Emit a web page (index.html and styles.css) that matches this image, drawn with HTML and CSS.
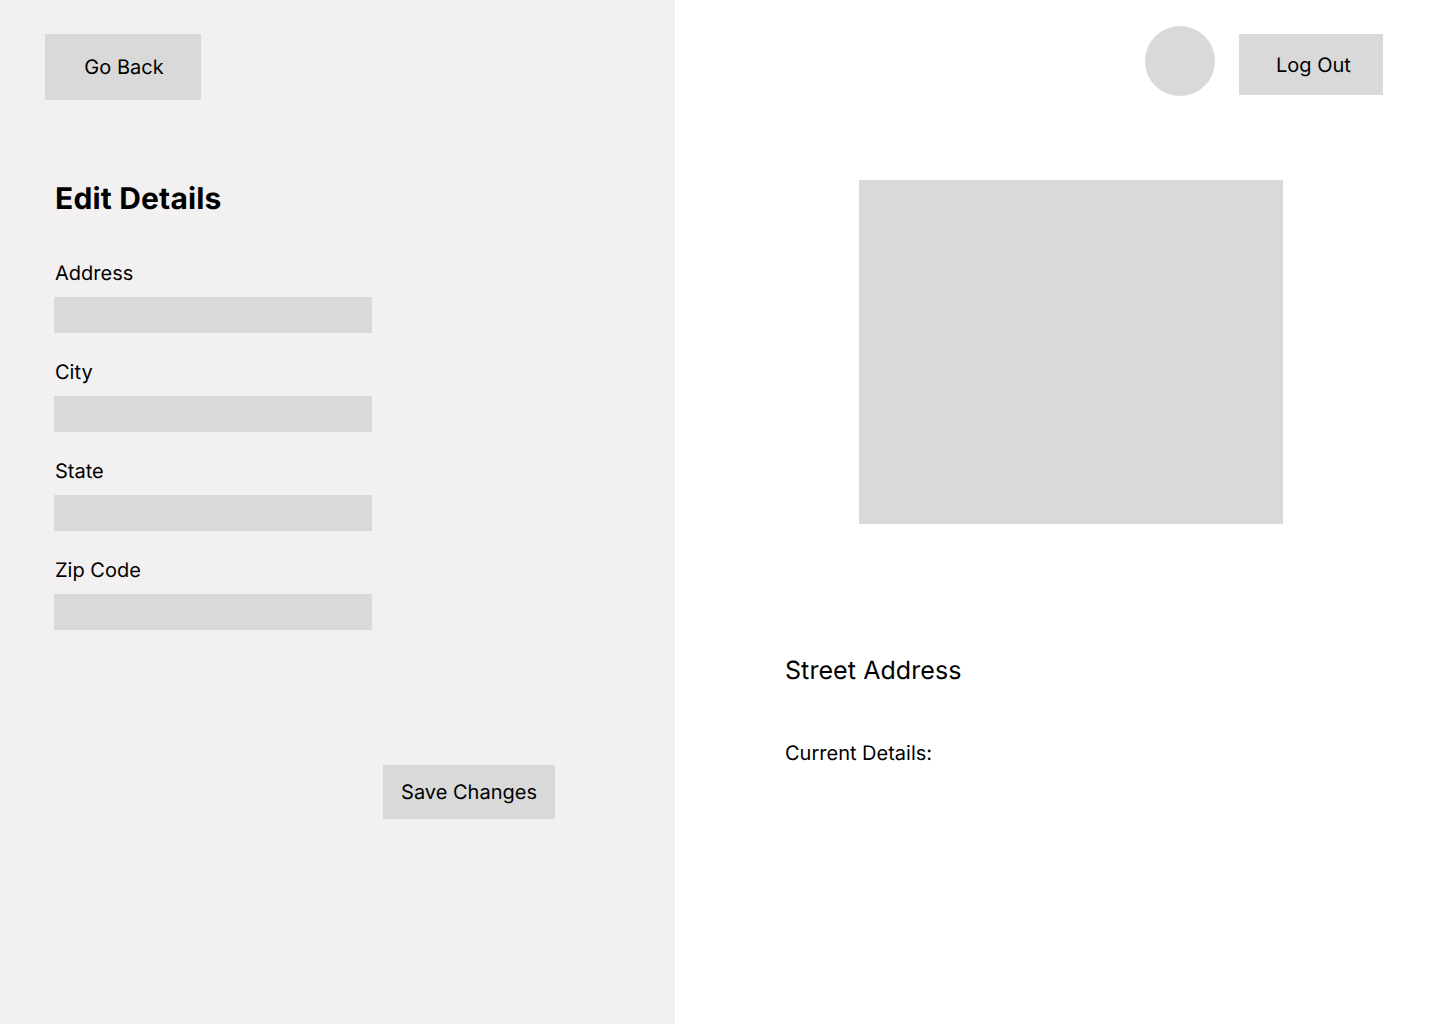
FILE: index.html
```html
<!doctype html>
<html>
	<head>
		<meta charset="utf-8">
		<title>Edit Details</title>
		<link rel="stylesheet" href="styles.css">
	</head>
	<body>
		<div class="page">
			<section class="editor">
				<button class="btn back">Go Back</button>
				<h1>Edit Details</h1>
				<form class="fields">
					<label class="field">
						<span>Address</span>
						<input type="text">
					</label>
					<label class="field">
						<span>City</span>
						<input type="text">
					</label>
					<label class="field">
						<span>State</span>
						<input type="text">
					</label>
					<label class="field">
						<span>Zip Code</span>
						<input type="text">
					</label>
				</form>
				<div class="actions">
					<button class="btn save">Save Changes</button>
				</div>
			</section>
			<section class="details">
				<header class="top">
					<div class="avatar"></div>
					<button class="btn logout">Log Out</button>
				</header>
				<div class="photo"></div>
				<h2>Street Address</h2>
				<p>Current Details:</p>
			</section>
		</div>
	</body>
</html>
```

FILE: styles.css
```css
* {
	box-sizing: border-box;
}
body {
	margin: 0;
	font-family: Inter, sans-serif;
	color: black;
	background: white;
	text-rendering: geometricPrecision;
}
.page {
	display: flex;
	height: 1024px;
	overflow: hidden;
}
.btn {
	display: block;
	border: 0;
	border-radius: 0;
	padding: 0;
	background: #D9D9D9;
	color: black;
	font-family: inherit;
	font-size: 20px;
	text-rendering: geometricPrecision;
}

/* left side */
.editor {
	width: 675px;
	flex: none;
	background: #F2F0F1;
	padding: 34px 0 0 45px;
}
.back {
	width: 156px;
	height: 66px;
	padding-left: 2px;
}
h1 {
	margin: 81px 0 0 10px;
	font-size: 30px;
	line-height: 36px;
	font-weight: 700;
	letter-spacing: .17px;
}
.fields {
	margin: 44px 0 0 9px;
	display: flex;
	flex-direction: column;
	gap: 27px;
}
.field {
	display: block;
}
.field span {
	display: block;
	margin-left: 1px;
	font-size: 20px;
	line-height: 24px;
	margin-bottom: 12px;
}
.field input {
	display: block;
	width: 318px;
	height: 36px;
	border: 0;
	border-radius: 0;
	padding: 0;
	background: #D9D9D9;
}
.actions {
	margin: 135px 0 0 338px;
}
.save {
	width: 172px;
	height: 54px;
}

/* right side */
.details {
	flex: 1;
	padding: 26px 0 0 110px;
}
.top {
	display: flex;
	align-items: flex-start;
	gap: 24px;
	margin-right: 57px;
	justify-content: flex-end;
}
.avatar {
	width: 70px;
	height: 70px;
	border-radius: 50%;
	background: #D9D9D9;
}
.logout {
	width: 144px;
	height: 61px;
	margin-top: 8px;
	padding-left: 5px;
}
.photo {
	width: 424px;
	height: 344px;
	margin: 84px 0 0 74px;
	background: #D9D9D9;
}
h2 {
	margin: 132px 0 0;
	font-size: 25px;
	line-height: 30px;
	font-weight: 400;
	letter-spacing: .08px;
}
.details p {
	margin: 55px 0 0;
	font-size: 20px;
	line-height: 24px;
}
```
